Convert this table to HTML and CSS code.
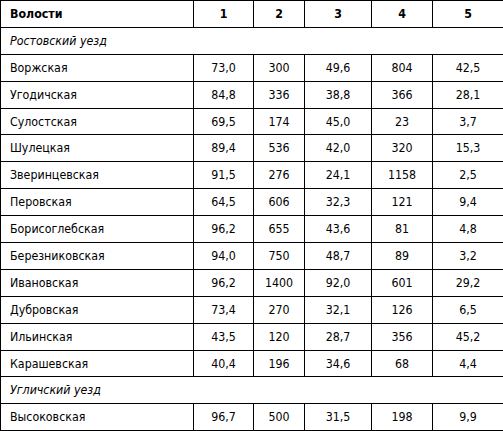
FILE: index.html
```html
<!DOCTYPE html>
<html lang="ru">
<head>
<meta charset="utf-8">
<link rel="stylesheet" href="styles.css">
</head>
<body>
<table class="data">
<colgroup>
<col class="c0"><col class="c1"><col class="c2"><col class="c3"><col class="c4"><col class="c5">
</colgroup>
<thead>
<tr class="head"><th class="name">Волости</th><th>1</th><th>2</th><th>3</th><th>4</th><th>5</th></tr>
</thead>
<tbody>
<tr><td class="uezd" colspan="6">Ростовский уезд</td></tr>
<tr><td class="name">Воржская</td><td>73,0</td><td>300</td><td>49,6</td><td>804</td><td>42,5</td></tr>
<tr><td class="name">Угодичская</td><td>84,8</td><td>336</td><td>38,8</td><td>366</td><td>28,1</td></tr>
<tr><td class="name">Сулостская</td><td>69,5</td><td>174</td><td>45,0</td><td>23</td><td>3,7</td></tr>
<tr><td class="name">Шулецкая</td><td>89,4</td><td>536</td><td>42,0</td><td>320</td><td>15,3</td></tr>
<tr><td class="name">Зверинцевская</td><td>91,5</td><td>276</td><td>24,1</td><td>1158</td><td>2,5</td></tr>
<tr><td class="name">Перовская</td><td>64,5</td><td>606</td><td>32,3</td><td>121</td><td>9,4</td></tr>
<tr><td class="name">Борисоглебская</td><td>96,2</td><td>655</td><td>43,6</td><td>81</td><td>4,8</td></tr>
<tr><td class="name">Березниковская</td><td>94,0</td><td>750</td><td>48,7</td><td>89</td><td>3,2</td></tr>
<tr><td class="name">Ивановская</td><td>96,2</td><td>1400</td><td>92,0</td><td>601</td><td>29,2</td></tr>
<tr><td class="name">Дубровская</td><td>73,4</td><td>270</td><td>32,1</td><td>126</td><td>6,5</td></tr>
<tr><td class="name">Ильинская</td><td>43,5</td><td>120</td><td>28,7</td><td>356</td><td>45,2</td></tr>
<tr><td class="name">Карашевская</td><td>40,4</td><td>196</td><td>34,6</td><td>68</td><td>4,4</td></tr>
<tr><td class="uezd" colspan="6">Угличский уезд</td></tr>
<tr><td class="name">Высоковская</td><td>96,7</td><td>500</td><td>31,5</td><td>198</td><td>9,9</td></tr>
</tbody>
</table>
</body>
</html>
```
FILE: styles.css
```css
html, body {
  margin: 0;
  padding: 0;
  background: #fff;
}
.data {
  border-collapse: collapse;
  table-layout: fixed;
  width: 503px;
  font-family: "DejaVu Sans Condensed", "DejaVu Sans", sans-serif;
  font-size: 12.3px;
  color: #000;
}
.c0 { width: 193px; }
.c1 { width: 60px; }
.c2 { width: 51px; }
.c3 { width: 67px; }
.c4 { width: 61px; }
.c5 { width: 71px; }
.data th, .data td {
  border: 1px solid #000;
  height: 26.9px;
  padding: 0;
  text-align: center;
  vertical-align: middle;
  box-sizing: border-box;
}
.data th { font-weight: bold; }
.data .name {
  text-align: left;
  padding-left: 9px;
}
.data .uezd {
  text-align: left;
  padding-left: 9px;
  font-style: italic;
}
```
